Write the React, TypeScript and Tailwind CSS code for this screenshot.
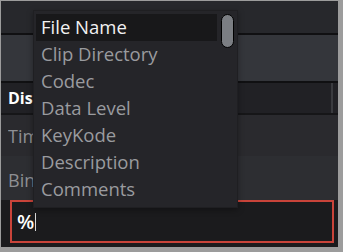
import React from "react";

const items = [
  "File Name",
  "Clip Directory",
  "Codec",
  "Data Level",
  "KeyKode",
  "Description",
  "Comments",
];

export default function App() {
  return (
    <div
      className="w-[343px] h-[252px] bg-[#9c9c9c] pt-px pl-px pr-[5px] pb-[5px] overflow-hidden"
      style={{ fontFamily: '"Open Sans", "Noto Sans", sans-serif' }}
    >
      <div className="relative w-full h-full flex flex-col bg-[#27282c]">
        <div className="h-[32px] bg-[#27282c]" />
        <div className="h-[2px] bg-[#101012]" />
        <div className="h-[46px] bg-[#34363b]" />
        <div className="h-[2px] bg-[#101012]" />
        <div className="h-[30px] bg-[#212125] flex items-center justify-between pl-[7px]">
          <span className="w-[25px] overflow-hidden whitespace-nowrap text-[16px] font-bold text-white leading-none">Display</span>
          <div className="w-[2px] h-full bg-[#3a3b3f] mr-[5px]" />
        </div>
        <div className="h-[2px] bg-[#161618]" />
        <div className="h-[41px] bg-[#2a2a2e] flex items-center pl-[7px]">
          <span className="w-[25px] overflow-hidden whitespace-nowrap text-[18px] text-[#8e8f93] leading-none">Timecode</span>
        </div>
        <div className="h-[44px] bg-[#2d2e32] flex items-center pl-[7px] pt-[3px]">
          <span className="w-[25px] overflow-hidden whitespace-nowrap text-[18px] text-[#8e8f93] leading-none">Bin</span>
        </div>
        <div className="flex-1 bg-[#1b1b1d] pl-[9px] pr-[4px]">
          <div className="h-[43px] border-2 border-[#c9443a] flex items-center pl-[5px]">
            <span className="text-[20px] font-semibold text-white leading-none">%</span>
            <span className="w-px h-[18px] bg-[#d8d8d8] ml-px" />
          </div>
        </div>

        <div className="absolute left-[32px] top-[9px] w-[205px] h-[198px] bg-[#252529] border border-[#1f1f22] shadow-[0_2px_6px_rgba(0,0,0,0.35)]">
          <div className="absolute left-[187px] top-[3px] w-[13px] h-[34px] rounded-full bg-[#7b7e83] border border-black" />
          <div className="flex flex-col pt-[3px] pl-[2px]">
            {items.map((t, i) => (
              <div
                key={t}
                className={
                  i === 0
                    ? "w-[181px] h-[27px] flex items-center pl-[5px] bg-[#18181a] text-[18.5px] text-[#f2f2f2] leading-none"
                    : "w-[181px] h-[27px] flex items-center pl-[5px] text-[18.5px] text-[#9a9b9f] leading-none"
                }
              >
                {t}
              </div>
            ))}
          </div>
        </div>
      </div>
    </div>
  );
}
